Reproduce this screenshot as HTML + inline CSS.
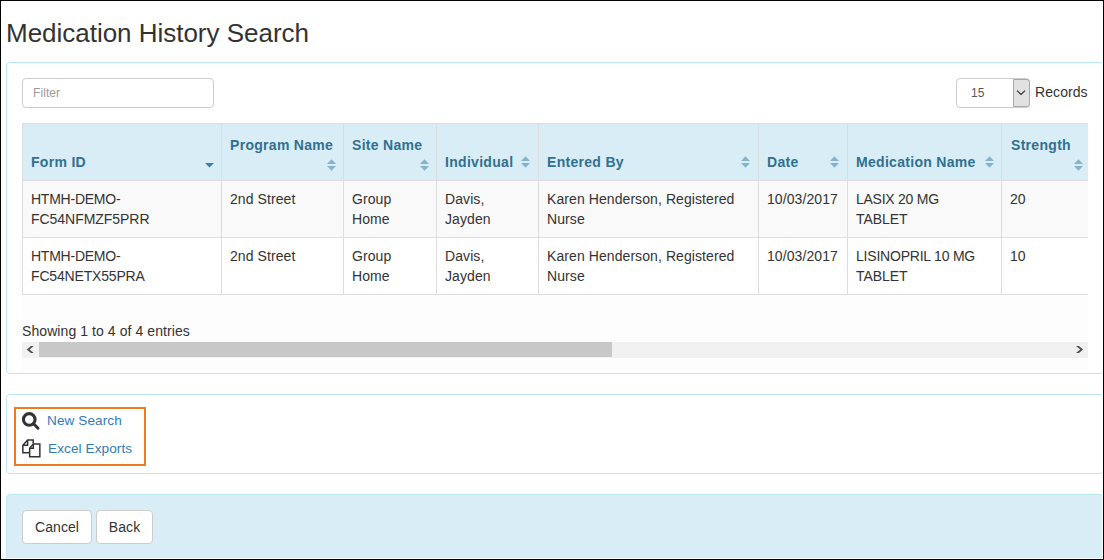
<!DOCTYPE html>
<html><head><meta charset="utf-8">
<style>
html,body{margin:0;padding:0;background:#fff;}
body{width:1104px;height:560px;overflow:hidden;position:relative;font-family:"Liberation Sans",sans-serif;font-size:14px;line-height:20px;color:#333;letter-spacing:0.08px;}
.abs{position:absolute;}
.frame{position:absolute;left:0;top:0;width:1102px;height:558px;border:1px solid #000;z-index:50;box-shadow:inset 0 0 0 1px rgba(255,255,255,.75);}
.title{position:absolute;left:6px;top:17.5px;font-size:26px;line-height:30px;color:#333;white-space:nowrap;letter-spacing:-0.02px;}
.panel{position:absolute;left:6px;width:1096px;border:1px solid #bce8f1;border-radius:4px;background:#fff;}
.input{position:absolute;box-sizing:border-box;border:1px solid #ccc;border-radius:4px;background:#fff;}
.tblwrap{position:absolute;left:22px;top:123px;width:1066px;height:172px;overflow:hidden;}
.thbg{position:absolute;background:#d9edf7;}
.rbg{position:absolute;}
.hl{position:absolute;left:0;height:1px;background:#ddd;}
.vl{position:absolute;top:0;width:1px;background:#ddd;}
.th{position:absolute;font-weight:bold;color:#31708f;white-space:nowrap;letter-spacing:0.3px;}
.td{position:absolute;white-space:nowrap;}
.si{position:absolute;}
.sb{position:absolute;left:22px;top:342px;width:1066px;height:16px;background:#f1f1f1;}
.thumb{position:absolute;left:17px;top:0;width:573px;height:15px;background:#c8c8c8;}
.orange{position:absolute;left:14px;top:407px;width:128px;height:55px;border:2px solid #f07b1f;}
a{color:#337ab7;text-decoration:none;}
.btn{position:absolute;box-sizing:border-box;height:34px;top:510px;border:1px solid #ccc;border-radius:4px;background:#fff;color:#333;text-align:center;line-height:20px;padding:6px 0;}
</style></head><body>
<div class="frame"></div>
<div class="title">Medication History Search</div>

<div class="panel" style="top:62px;height:310px;"></div>
<div class="input" style="left:22px;top:78px;width:192px;height:30px;"></div>
<div class="abs" style="left:33px;top:83px;font-size:12px;line-height:20px;color:#999;">Filter</div>
<div class="input" style="left:956px;top:78px;width:74px;height:30px;"></div>
<div class="abs" style="left:1013px;top:79px;width:17px;height:28px;background:#e1e1e1;border:1px solid #a9a9a9;border-radius:0 3px 3px 0;box-sizing:border-box;"></div>
<svg class="abs" style="left:1016px;top:89px" width="10" height="7" viewBox="0 0 10 7"><path d="M1 1.6L5 5.4L9 1.6" fill="none" stroke="#2a2a2a" stroke-width="1.1"/></svg>
<div class="abs" style="left:971px;top:83px;font-size:12px;line-height:20px;color:#555;">15</div>
<div class="abs" style="left:1035px;top:82px;">Records</div>

<div class="tblwrap">
<div class="thbg" style="left:0;top:0;width:1070px;height:57px"></div>
<div class="rbg" style="left:0;top:57px;width:1070px;height:57px;background:#f9f9f9"></div>
<div class="hl" style="top:0px;width:1070px"></div>
<div class="hl" style="top:57px;width:1070px"></div>
<div class="hl" style="top:114px;width:1070px"></div>
<div class="hl" style="top:171px;width:1070px"></div>
<div class="vl" style="left:0px;height:172px"></div>
<div class="vl" style="left:199px;height:172px"></div>
<div class="vl" style="left:321px;height:172px"></div>
<div class="vl" style="left:414px;height:172px"></div>
<div class="vl" style="left:516px;height:172px"></div>
<div class="vl" style="left:736px;height:172px"></div>
<div class="vl" style="left:825px;height:172px"></div>
<div class="vl" style="left:979px;height:172px"></div>
<div class="vl" style="left:1069px;height:172px"></div>
<div class="th" style="left:9px;top:29.15px">Form ID</div>
<svg class="si" style="left:183px;top:34px" width="9" height="12" viewBox="0 0 9 12"><path d="M-0.2 5.9H9.2L4.5 10.6Z" fill="#3b80a9"/></svg>
<div class="th" style="left:208px;top:11.85px">Program Name</div>
<svg class="si" style="left:305px;top:36px" width="9" height="12" viewBox="0 0 9 12"><path d="M0 5H9L4.5 0.2Z M0 7H9L4.5 11.8Z" fill="#86b3cc"/></svg>
<div class="th" style="left:330px;top:11.85px">Site Name</div>
<svg class="si" style="left:398px;top:36px" width="9" height="12" viewBox="0 0 9 12"><path d="M0 5H9L4.5 0.2Z M0 7H9L4.5 11.8Z" fill="#86b3cc"/></svg>
<div class="th" style="left:423px;top:29.15px">Individual</div>
<svg class="si" style="left:499px;top:33px" width="9" height="12" viewBox="0 0 9 12"><path d="M0 5H9L4.5 0.2Z M0 7H9L4.5 11.8Z" fill="#86b3cc"/></svg>
<div class="th" style="left:525px;top:29.15px">Entered By</div>
<svg class="si" style="left:719px;top:33px" width="9" height="12" viewBox="0 0 9 12"><path d="M0 5H9L4.5 0.2Z M0 7H9L4.5 11.8Z" fill="#86b3cc"/></svg>
<div class="th" style="left:745px;top:29.15px">Date</div>
<svg class="si" style="left:808px;top:33px" width="9" height="12" viewBox="0 0 9 12"><path d="M0 5H9L4.5 0.2Z M0 7H9L4.5 11.8Z" fill="#86b3cc"/></svg>
<div class="th" style="left:834px;top:29.15px">Medication Name</div>
<svg class="si" style="left:963px;top:33px" width="9" height="12" viewBox="0 0 9 12"><path d="M0 5H9L4.5 0.2Z M0 7H9L4.5 11.8Z" fill="#86b3cc"/></svg>
<div class="th" style="left:989px;top:11.85px">Strength</div>
<svg class="si" style="left:1052px;top:36px" width="9" height="12" viewBox="0 0 9 12"><path d="M0 5H9L4.5 0.2Z M0 7H9L4.5 11.8Z" fill="#86b3cc"/></svg>
<div class="td" style="left:9px;top:66px"><span style="letter-spacing:-0.24px">HTMH-DEMO-</span><br><span style="letter-spacing:-0.04px">FC54NFMZF5PRR</span></div>
<div class="td" style="left:208px;top:66px">2nd Street</div>
<div class="td" style="left:330px;top:66px">Group<br>Home</div>
<div class="td" style="left:423px;top:66px">Davis,<br>Jayden</div>
<div class="td" style="left:525px;top:66px">Karen Henderson, Registered<br>Nurse</div>
<div class="td" style="left:745px;top:66px">10/03/2017</div>
<div class="td" style="left:834px;top:66px"><span style="letter-spacing:-0.25px">LASIX 20 MG</span><br><span style="letter-spacing:-0.04px">TABLET</span></div>
<div class="td" style="left:988px;top:66px">20</div>
<div class="td" style="left:9px;top:123px"><span style="letter-spacing:-0.24px">HTMH-DEMO-</span><br><span style="letter-spacing:-0.17px">FC54NETX55PRA</span></div>
<div class="td" style="left:208px;top:123px">2nd Street</div>
<div class="td" style="left:330px;top:123px">Group<br>Home</div>
<div class="td" style="left:423px;top:123px">Davis,<br>Jayden</div>
<div class="td" style="left:525px;top:123px">Karen Henderson, Registered<br>Nurse</div>
<div class="td" style="left:745px;top:123px">10/03/2017</div>
<div class="td" style="left:834px;top:123px"><span style="letter-spacing:-0.21px">LISINOPRIL 10 MG</span><br><span style="letter-spacing:-0.04px">TABLET</span></div>
<div class="td" style="left:988px;top:123px">10</div>
</div>

<div class="abs" style="left:22px;top:295px;width:1066px;height:77px;background:#fdfdfd;"></div>
<div class="abs" style="left:22px;top:321px;">Showing 1 to 4 of 4 entries</div>
<div class="sb"><div class="thumb"></div>
<svg class="abs" style="left:0;top:0" width="1066" height="16" viewBox="0 0 1066 16"><path d="M4.7 7.45L8.9 3.9H11.8L7.6 7.45L11.8 11H8.9Z" fill="#505050"/><path d="M1061.1 7.5L1056.9 4H1054L1058.2 7.5L1054 11H1056.9Z" fill="#505050"/></svg>
</div>

<div class="panel" style="top:394px;height:78px;"></div>
<div class="orange"></div>
<svg class="abs" style="left:21px;top:411px" width="20" height="20" viewBox="0 0 20 20"><circle cx="8.25" cy="8.45" r="5.8" fill="none" stroke="#333" stroke-width="3.1"/><path d="M12.6 12.8L17 17.2" stroke="#333" stroke-width="3" stroke-linecap="round"/></svg>
<a class="abs" style="left:47px;top:411px;font-size:13.6px;">New Search</a>
<svg class="abs" style="left:16px;top:430px" width="40" height="40" viewBox="16 430 40 40"><path d="M33.2 443.5V440H27.6L22.85 445.3V452.85H29.5 M27.6 440V445.3H22.85" fill="none" stroke="#333" stroke-width="1.5" stroke-linejoin="miter"/><path d="M33.3 443.9H39.85V456.75H29.65V448.3L33.3 443.9Z" fill="#fff" stroke="#333" stroke-width="1.5"/><path d="M33.3 443.9V448.3H29.65" fill="none" stroke="#333" stroke-width="1.5"/></svg>
<a class="abs" style="left:48px;top:439px;font-size:13.6px;">Excel Exports</a>

<div class="panel" style="top:494px;height:80px;background:#d9edf7;"></div>
<div class="btn" style="left:22px;width:70px;">Cancel</div>
<div class="btn" style="left:96px;width:57px;">Back</div>
</body></html>
